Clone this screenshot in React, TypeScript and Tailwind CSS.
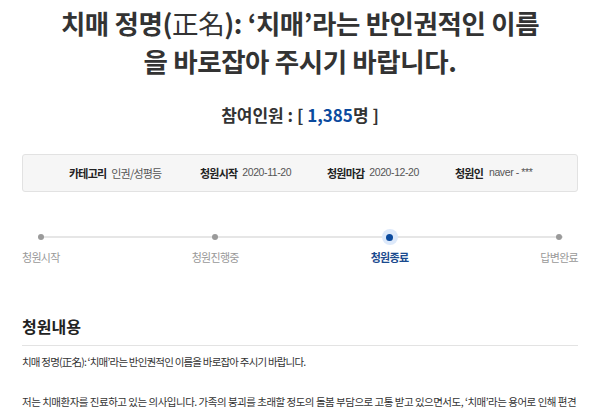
import React from "react";

const font = { fontFamily: '"Noto Sans CJK KR", "Noto Sans", sans-serif' };
const num = { fontFamily: '"Liberation Sans", Arial, sans-serif' };

const steps = [
  { label: "청원시작", active: false },
  { label: "청원진행중", active: false },
  { label: "청원종료", active: true },
  { label: "답변완료", active: false },
];

export default function App() {
  return (
    <div className="w-[600px] h-[409px] overflow-hidden bg-white text-[#333]" style={font}>
      <div className="px-[22px]">
        <h1 className="pt-[4px] text-center text-[26.5px] leading-[38px] font-bold text-[#333] tracking-[-0.4px]">
          치매 정명(<span className="font-normal">正名</span>): ‘치매’라는 반인권적인 이름
          <br />을 바로잡아 주시기 바랍니다.
        </h1>
        <div className="mt-[23px] text-center text-[17px] leading-[24px] font-bold text-[#333]">
          참여인원 : [ <span className="text-[#0b4a9e]">1,385</span>명 ]
        </div>
        <div className="mt-[27px] h-[38px] flex items-center rounded-[3px] border border-[#e2e2e2] bg-[#f6f6f6] pl-[46px] text-[11px]">
          <div className="w-[131px] flex items-center gap-[5px]">
            <span className="font-bold text-[#222] tracking-[-0.8px]">카테고리</span>
            <span className="text-[#555] tracking-[-0.8px]">인권/성평등</span>
          </div>
          <div className="w-[127px] flex items-center gap-[5px]">
            <span className="font-bold text-[#222] tracking-[-0.8px]">청원시작</span>
            <span className="text-[#555] text-[10.5px] tracking-[-0.4px]" style={num}>2020-11-20</span>
          </div>
          <div className="w-[128px] flex items-center gap-[5px]">
            <span className="font-bold text-[#222] tracking-[-0.8px]">청원마감</span>
            <span className="text-[#555] text-[10.5px] tracking-[-0.4px]" style={num}>2020-12-20</span>
          </div>
          <div className="flex items-center gap-[6px]">
            <span className="font-bold text-[#222] tracking-[-0.8px]">청원인</span>
            <span className="text-[#555] text-[10.5px] tracking-[-0.4px]" style={num}>naver - ***</span>
          </div>
        </div>

        <div className="relative mt-[38px]">
          <div className="absolute left-[19px] right-[15px] top-[6px] h-[2px] bg-[#e6e6e6]" />
          <div className="relative flex justify-between">
            {steps.map((s) => (
              <div key={s.label} className="flex flex-col items-center">
                <div className="h-[14px] flex items-center justify-center">
                  {s.active ? (
                    <div className="w-[16px] h-[16px] -my-[1px] rounded-full bg-[#dde9fa] flex items-center justify-center">
                      <div className="w-[7px] h-[7px] rounded-full bg-[#0b4a9e]" />
                    </div>
                  ) : (
                    <div className="w-[6px] h-[6px] rounded-full bg-[#9a9a9a]" />
                  )}
                </div>
                <div
                  className={
                    s.active
                      ? "mt-[5px] text-[11px] leading-[16px] font-bold text-[#1a4a8e] tracking-[-0.7px]"
                      : "mt-[5px] text-[11px] leading-[16px] text-[#999] tracking-[-0.7px]"
                  }
                >
                  {s.label}
                </div>
              </div>
            ))}
          </div>
        </div>

        <div className="mt-[50px] text-[16px] leading-[22px] font-bold text-[#222]">청원내용</div>
        <div className="mt-[8px] h-px bg-[#e3e3e3]" />
        <p className="mt-[8px] text-[10.5px] leading-[16px] text-[#333] tracking-[-0.8px] whitespace-nowrap">
          치매 정명(正名): ‘치매’라는 반인권적인 이름을 바로잡아 주시기 바랍니다.
        </p>
        <p className="mt-[24px] text-[10.5px] leading-[16px] text-[#333] whitespace-nowrap tracking-[-0.5px]">
          저는 치매환자를 진료하고 있는 의사입니다. 가족의 붕괴를 초래할 정도의 돌봄 부담으로 고통 받고 있으면서도, ‘치매’라는 용어로 인해 편견
        </p>
      </div>
    </div>
  );
}
